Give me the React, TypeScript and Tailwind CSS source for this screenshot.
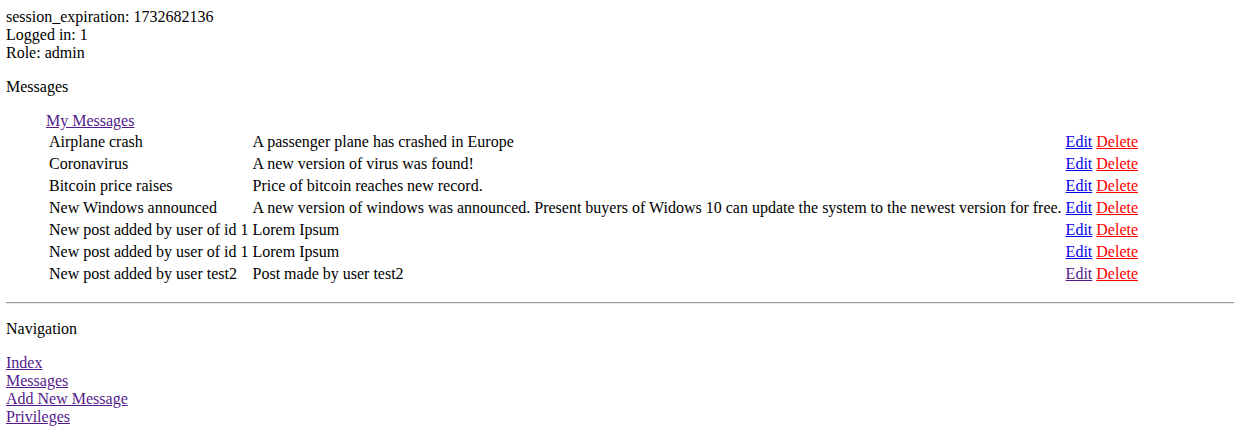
const messages = [
  { title: 'Airplane crash', body: 'A passenger plane has crashed in Europe', visited: false },
  { title: 'Coronavirus', body: 'A new version of virus was found!', visited: false },
  { title: 'Bitcoin price raises', body: 'Price of bitcoin reaches new record.', visited: false },
  {
    title: 'New Windows announced',
    body: 'A new version of windows was announced. Present buyers of Widows 10 can update the system to the newest version for free.',
    visited: false,
  },
  { title: 'New post added by user of id 1', body: 'Lorem Ipsum', visited: false },
  { title: 'New post added by user of id 1', body: 'Lorem Ipsum', visited: false },
  { title: 'New post added by user test2', body: 'Post made by user test2', visited: true },
];

const navLinks = ['Index', 'Messages', 'Add New Message', 'Privileges'];

export default function App() {
  return (
    <div className="bg-white pt-[8px] pl-[6px] font-['Liberation_Serif','Times_New_Roman',serif] text-[16px] leading-[18px] text-black">
      <div>session_expiration: 1732682136</div>
      <div>Logged in: 1</div>
      <div>Role: admin</div>

      <p className="mt-4">Messages</p>

      <div className="mt-4 pl-10">
        <a href="#" className="text-[#551a8b] underline">
          My Messages
        </a>
        <table className="border-separate border-spacing-[2px]">
          <tbody>
            {messages.map((m, i) => (
              <tr key={i}>
                <td className="p-px whitespace-nowrap">{m.title}</td>
                <td className="p-px">{m.body}</td>
                <td className="p-px whitespace-nowrap">
                  <a href="#" className={m.visited ? 'text-[#551a8b] underline' : 'text-[#0000ee] underline'}>
                    Edit
                  </a>{' '}
                  <a href="#" className="text-[#ff0000] underline">
                    Delete
                  </a>
                </td>
              </tr>
            ))}
          </tbody>
        </table>
      </div>

      <hr className="mt-4 h-0 border-0 border-t border-b border-t-[#9a9a9a] border-b-[#eeeeee]" />

      <p className="mt-4">Navigation</p>

      <div className="mt-4 flex flex-col items-start pb-2">
        {navLinks.map((l) => (
          <a key={l} href="#" className="text-[#551a8b] underline">
            {l}
          </a>
        ))}
      </div>
    </div>
  );
}
